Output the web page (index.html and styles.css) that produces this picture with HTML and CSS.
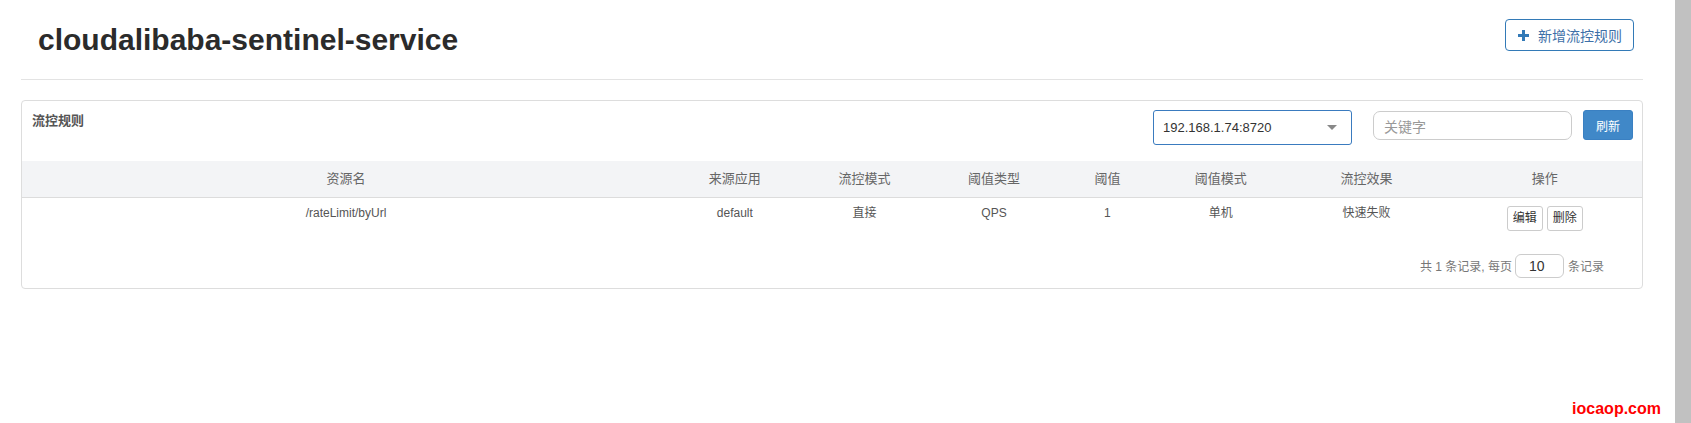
FILE: index.html
```html
<!DOCTYPE html>
<html lang="zh-CN">
<head>
<meta charset="utf-8">
<title>流控规则</title>
<link rel="stylesheet" href="styles.css">
</head>
<body>
<div class="viewport">
  <div class="main">
    <div class="page">
      <div class="page-header">
        <h1 class="app-title">cloudalibaba-sentinel-service</h1>
        <button class="btn-add" type="button">
          <svg class="plus" width="11" height="11" viewBox="0 0 11 11"><path d="M4 0h3v4h4v3H7v4H4V7H0V4h4z" fill="#337ab7"/></svg>
          <span>新增流控规则</span>
        </button>
      </div>

      <div class="panel">
        <div class="panel-head">
          <div class="panel-title">流控规则</div>
          <div class="select-box">
            <span class="select-text">192.168.1.74:8720</span>
            <span class="caret"></span>
          </div>
          <div class="search-input"><span class="placeholder">关键字</span></div>
          <button class="btn-refresh" type="button">刷新</button>
        </div>

        <table class="rules">
          <colgroup>
            <col class="c40"><col class="c8"><col class="c8"><col class="c8"><col class="c6"><col class="c8"><col class="c10"><col class="c12">
          </colgroup>
          <thead>
            <tr>
              <th>资源名</th><th>来源应用</th><th>流控模式</th><th>阈值类型</th><th>阈值</th><th>阈值模式</th><th>流控效果</th><th>操作</th>
            </tr>
          </thead>
          <tbody>
            <tr>
              <td>/rateLimit/byUrl</td>
              <td>default</td>
              <td>直接</td>
              <td>QPS</td>
              <td>1</td>
              <td>单机</td>
              <td>快速失败</td>
              <td><div class="ops"><button class="btn-op" type="button">编辑</button><button class="btn-op" type="button">删除</button></div></td>
            </tr>
          </tbody>
        </table>

        <div class="pager">
          <span class="pager-text">共 1 条记录, 每页</span>
          <div class="pager-input">10</div>
          <span class="pager-text">条记录</span>
        </div>
      </div>
    </div>
    <div class="watermark">iocaop.com</div>
  </div>
  <div class="scrollbar"></div>
</div>
</body>
</html>
```

FILE: styles.css
```css
* { box-sizing: border-box; }

html, body {
  margin: 0;
  padding: 0;
  background: #fff;
}

body {
  font-family: "Liberation Sans", Arial, "Noto Sans CJK SC", sans-serif;
  color: #333;
}

.viewport {
  display: grid;
  grid-template-columns: 1675px 16px;
  width: 1691px;
  height: 423px;
  overflow: hidden;
}

.main {
  position: relative;
  height: 423px;
  background: #fff;
}

.scrollbar {
  height: 423px;
  background: #c1c1c1;
}

.page {
  margin-left: 21px;
  width: 1622px;
}

.page-header {
  display: flex;
  justify-content: space-between;
  align-items: flex-start;
  height: 80px;
  padding-top: 19px;
  border-bottom: 1px solid #e3e3e3;
}

.app-title {
  margin: 4px 0 0 17px;
  font-size: 30px;
  line-height: 33px;
  font-weight: bold;
  color: #2b2b2b;
}

.btn-add {
  display: flex;
  align-items: center;
  height: 32px;
  margin-right: 9px;
  padding: 0 11px 0 12px;
  border: 1px solid #337ab7;
  border-radius: 4px;
  background: #fff;
  color: #3d6fa8;
  font-family: inherit;
  font-size: 14px;
  cursor: pointer;
}

.btn-add .plus {
  margin-right: 9px;
}

.panel {
  margin-top: 20px;
  border: 1px solid #ddd;
  border-radius: 4px;
  background: #fff;
}

.panel-head {
  display: flex;
  align-items: flex-start;
  height: 60px;
  padding: 9px 9px 0 10px;
}

.panel-title {
  flex: 1;
  margin-top: 2px;
  font-size: 13px;
  line-height: 18px;
  font-weight: bold;
  color: #555;
}

.select-box {
  display: flex;
  align-items: center;
  justify-content: space-between;
  width: 199px;
  height: 35px;
  margin-right: 21px;
  padding: 0 14px 0 9px;
  border: 1px solid #3a7bbf;
  border-radius: 3px;
  font-size: 13px;
  color: #333;
}

.caret {
  width: 0;
  height: 0;
  border-left: 5px solid transparent;
  border-right: 5px solid transparent;
  border-top: 5px solid #888;
}

.search-input {
  display: flex;
  align-items: center;
  width: 199px;
  height: 29px;
  margin-top: 1px;
  margin-right: 11px;
  padding-left: 10px;
  border: 1px solid #ccc;
  border-radius: 7px;
  font-size: 14px;
}

.placeholder {
  color: #999;
}

.btn-refresh {
  width: 50px;
  height: 30px;
  padding: 0;
  border: 1px solid #3a80c2;
  border-radius: 3px;
  background: #4088c8;
  color: #fff;
  font-family: inherit;
  font-size: 12px;
}

.rules {
  width: 100%;
  table-layout: fixed;
  border-collapse: collapse;
}

.c40 { width: 40%; }
.c12 { width: 12%; }
.c10 { width: 10%; }
.c8 { width: 8%; }
.c6 { width: 6%; }

.rules th {
  height: 36px;
  padding: 8px;
  background: #f3f4f6;
  border-bottom: 1px solid #dcdcdc;
  font-size: 13px;
  line-height: 19px;
  font-weight: normal;
  color: #666;
  text-align: center;
}

.rules td {
  padding: 8px;
  vertical-align: top;
  font-size: 12px;
  line-height: 14px;
  color: #555;
  text-align: center;
}

.ops {
  display: flex;
  justify-content: center;
  gap: 4px;
}

.btn-op {
  height: 25px;
  padding: 0 5px;
  border: 1px solid #ccc;
  border-radius: 3px;
  background: #fff;
  color: #333;
  font-family: inherit;
  font-size: 12px;
  line-height: 23px;
}

.pager {
  display: flex;
  justify-content: flex-end;
  align-items: center;
  margin-top: 15px;
  padding: 0 38px 10px 0;
}

.pager-text {
  font-size: 12px;
  color: #777;
}

.pager-text:first-child {
  margin-right: 1px;
}

.pager-input {
  width: 49px;
  height: 24px;
  margin: 0 4px 0 2px;
  padding-left: 13px;
  border: 1px solid #ccc;
  border-radius: 6px;
  font-size: 14px;
  line-height: 22px;
  color: #333;
}

.watermark {
  position: absolute;
  right: 14px;
  bottom: 5px;
  font-size: 16px;
  font-weight: bold;
  color: #f00;
  line-height: 18px;
}
```
